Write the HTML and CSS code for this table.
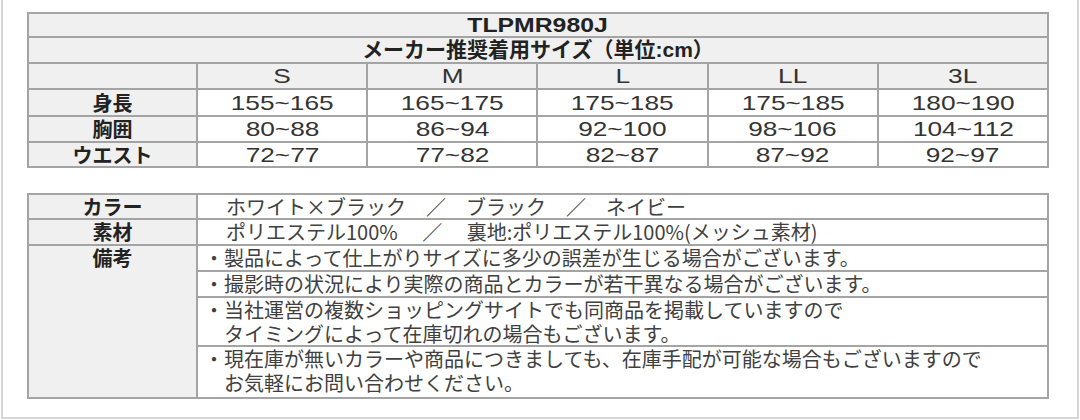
FILE: index.html
```html
<!DOCTYPE html>
<html lang="ja">
<head>
<meta charset="utf-8">
<title>TLPMR980J サイズ表</title>
<link rel="stylesheet" href="styles.css">
</head>
<body>
<div class="frame">
  <div class="sizes">
    <div class="cell head span"><span class="n title">TLPMR980J</span></div>
    <div class="cell head span sub">メーカー推奨着用サイズ（単位:cm）</div>
    <div class="cell head"></div>
    <div class="cell head"><span class="n">S</span></div>
    <div class="cell head"><span class="n">M</span></div>
    <div class="cell head"><span class="n">L</span></div>
    <div class="cell head"><span class="n">LL</span></div>
    <div class="cell head"><span class="n">3L</span></div>

    <div class="cell label">身長</div>
    <div class="cell"><span class="n">155~165</span></div>
    <div class="cell"><span class="n">165~175</span></div>
    <div class="cell"><span class="n">175~185</span></div>
    <div class="cell"><span class="n">175~185</span></div>
    <div class="cell"><span class="n">180~190</span></div>

    <div class="cell label">胸囲</div>
    <div class="cell"><span class="n">80~88</span></div>
    <div class="cell"><span class="n">86~94</span></div>
    <div class="cell"><span class="n">92~100</span></div>
    <div class="cell"><span class="n">98~106</span></div>
    <div class="cell"><span class="n">104~112</span></div>

    <div class="cell label">ウエスト</div>
    <div class="cell"><span class="n">72~77</span></div>
    <div class="cell"><span class="n">77~82</span></div>
    <div class="cell"><span class="n">82~87</span></div>
    <div class="cell"><span class="n">87~92</span></div>
    <div class="cell"><span class="n">92~97</span></div>
  </div>

  <div class="spec">
    <div class="cell label">カラー</div>
    <div class="cell text">ホワイト×ブラック　／　ブラック　／　ネイビー</div>
    <div class="cell label">素材</div>
    <div class="cell text">ポリエステル100%　 ／　 裏地:ポリエステル100%(メッシュ素材)</div>
    <div class="cell label notes-label">備考</div>
    <div class="cell note">・製品によって仕上がりサイズに多少の誤差が生じる場合がございます。</div>
    <div class="cell note">・撮影時の状況により実際の商品とカラーが若干異なる場合がございます。</div>
    <div class="cell note">・当社運営の複数ショッピングサイトでも同商品を掲載していますので<br>　タイミングによって在庫切れの場合もございます。</div>
    <div class="cell note">・現在庫が無いカラーや商品につきましても、在庫手配が可能な場合もございますので<br>　お気軽にお問い合わせください。</div>
  </div>
</div>
</body>
</html>
```

FILE: styles.css
```css
html, body {
  margin: 0;
  padding: 0;
  background: #ffffff;
}

.frame {
  box-sizing: border-box;
  width: 1078px;
  height: 419px;
  margin-left: 1px;
  border-left: 2px solid #d6d6d6;
  border-right: 2px solid #d6d6d6;
  border-bottom: 2px solid #d6d6d6;
  padding: 12px 0 0 24px;
  display: flex;
  flex-direction: column;
  gap: 25px;
  color: #2e2e2e;
  font-family: "Liberation Sans", "Noto Sans CJK JP", sans-serif;
}

.sizes,
.spec {
  box-sizing: border-box;
  width: 1022px;
  display: grid;
  gap: 2px;
  padding: 2px;
  background: #a4a4a4;
}

.sizes {
  grid-template-columns: 167px repeat(5, 1fr);
  grid-template-rows: 22px 24px 24px 25px 24px 23px;
}

.spec {
  grid-template-columns: 167px 1fr;
  grid-template-rows: 23px 24px 24px 24px 47px 50px;
}

.cell {
  background: #ffffff;
  display: flex;
  align-items: center;
  justify-content: center;
  white-space: nowrap;
  font-size: 21px;
  line-height: 22px;
}

.head,
.label {
  background: #f0f0f0;
}

.span {
  grid-column: 1 / -1;
}

.n {
  display: inline-block;
  transform: scaleX(1.25);
  font-family: "Liberation Sans", sans-serif;
  font-size: 21px;
  line-height: 22px;
  color: #333333;
}

.n.title {
  font-weight: 700;
  transform: scaleX(1.18);
  color: #222222;
}

.sub {
  font-family: "Liberation Sans", "Noto Sans CJK JP", sans-serif;
  font-weight: 700;
  font-size: 21px;
  color: #222222;
}

.label {
  font-family: "Noto Sans CJK JP", sans-serif;
  font-weight: 700;
  font-size: 20px;
  color: #222222;
}

.notes-label {
  grid-row: 3 / span 4;
  align-items: flex-start;
  padding-top: 1px;
}

.text,
.note {
  justify-content: flex-start;
  font-family: "Noto Sans CJK JP", sans-serif;
  font-size: 20px;
  color: #404040;
}

.text {
  padding-left: 28px;
}

.note {
  padding-left: 6px;
  align-items: flex-start;
  line-height: 24px;
}
```
